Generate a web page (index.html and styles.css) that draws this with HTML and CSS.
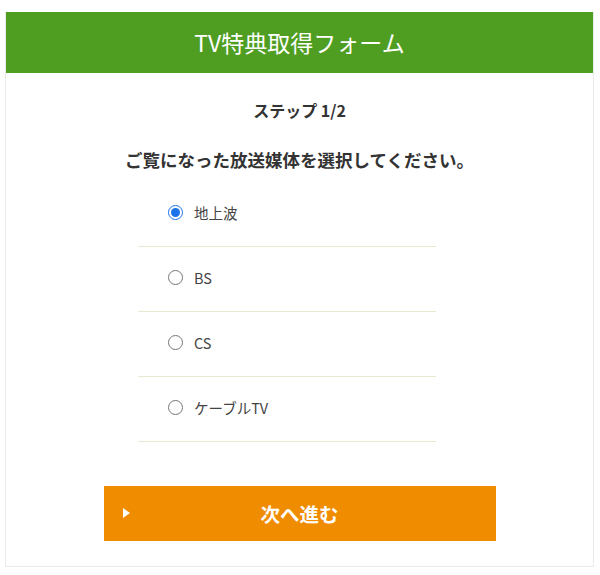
FILE: index.html
```html
<!DOCTYPE html>
<html lang="ja">
<head>
    <meta charset="UTF-8">
    <meta name="viewport" content="width=device-width, initial-scale=1.0">
    <title>TV特典取得フォーム</title>
    <link rel="stylesheet" href="styles.css">
</head>
<body>
    <div class="card">
        <div class="card-header">TV特典取得フォーム</div>
        <div class="card-body">
            <p class="step">ステップ 1/2</p>
            <p class="question">ご覧になった放送媒体を選択してください。</p>
            <form class="options">
                <label class="option"><input type="radio" name="media" value="地上波" checked> 地上波</label>
                <label class="option"><input type="radio" name="media" value="BS"> BS</label>
                <label class="option"><input type="radio" name="media" value="CS"> CS</label>
                <label class="option"><input type="radio" name="media" value="ケーブルTV"> ケーブルTV</label>
            </form>
            <button type="button" class="next-btn"><span class="arrow"></span>次へ進む</button>
        </div>
    </div>
</body>
</html>
```

FILE: styles.css
```css
body {
    margin: 0;
    background-color: #fff;
    font-family: "Noto Sans CJK JP", "Noto Sans", sans-serif;
    color: #333;
}
.card {
    margin: 12px 6px 0 5px;
    border: 1px solid #ebebeb;
    border-top: none;
    background-color: #fff;
}
.card-header {
    height: 61px;
    line-height: 60px;
    background-color: #4f9e22;
    color: #fff;
    text-align: center;
    font-size: 23px;
}
.card-body {
    padding: 26px 0 25px;
}
.step {
    margin: 0;
    text-align: center;
    font-size: 16px;
    font-weight: bold;
    line-height: 22px;
}
.question {
    margin: 27px 0 0;
    text-align: center;
    font-size: 17.5px;
    font-weight: bold;
    line-height: 24px;
}
.options {
    width: 298px;
    margin: 10px 0 0 132px;
}
.option {
    display: flex;
    align-items: center;
    height: 60px;
    padding: 0 0 4px 30px;
    border-bottom: 1px solid #e9e9d2;
    font-size: 14.5px;
    color: #444;
    cursor: pointer;
}
.option input {
    width: 15px;
    height: 15px;
    margin: 0 11px 0 0;
    accent-color: #1a73e8;
}
.next-btn {
    display: flex;
    align-items: center;
    justify-content: center;
    position: relative;
    width: 392px;
    height: 55px;
    margin: 44px auto 0;
    padding: 0;
    border: none;
    background-color: #f08c00;
    color: #fff;
    font-family: inherit;
    font-size: 19.5px;
    font-weight: bold;
    cursor: pointer;
}
.arrow {
    position: absolute;
    left: 19px;
    top: 22px;
    border-left: 7px solid #fff;
    border-top: 5px solid transparent;
    border-bottom: 5px solid transparent;
}
```
